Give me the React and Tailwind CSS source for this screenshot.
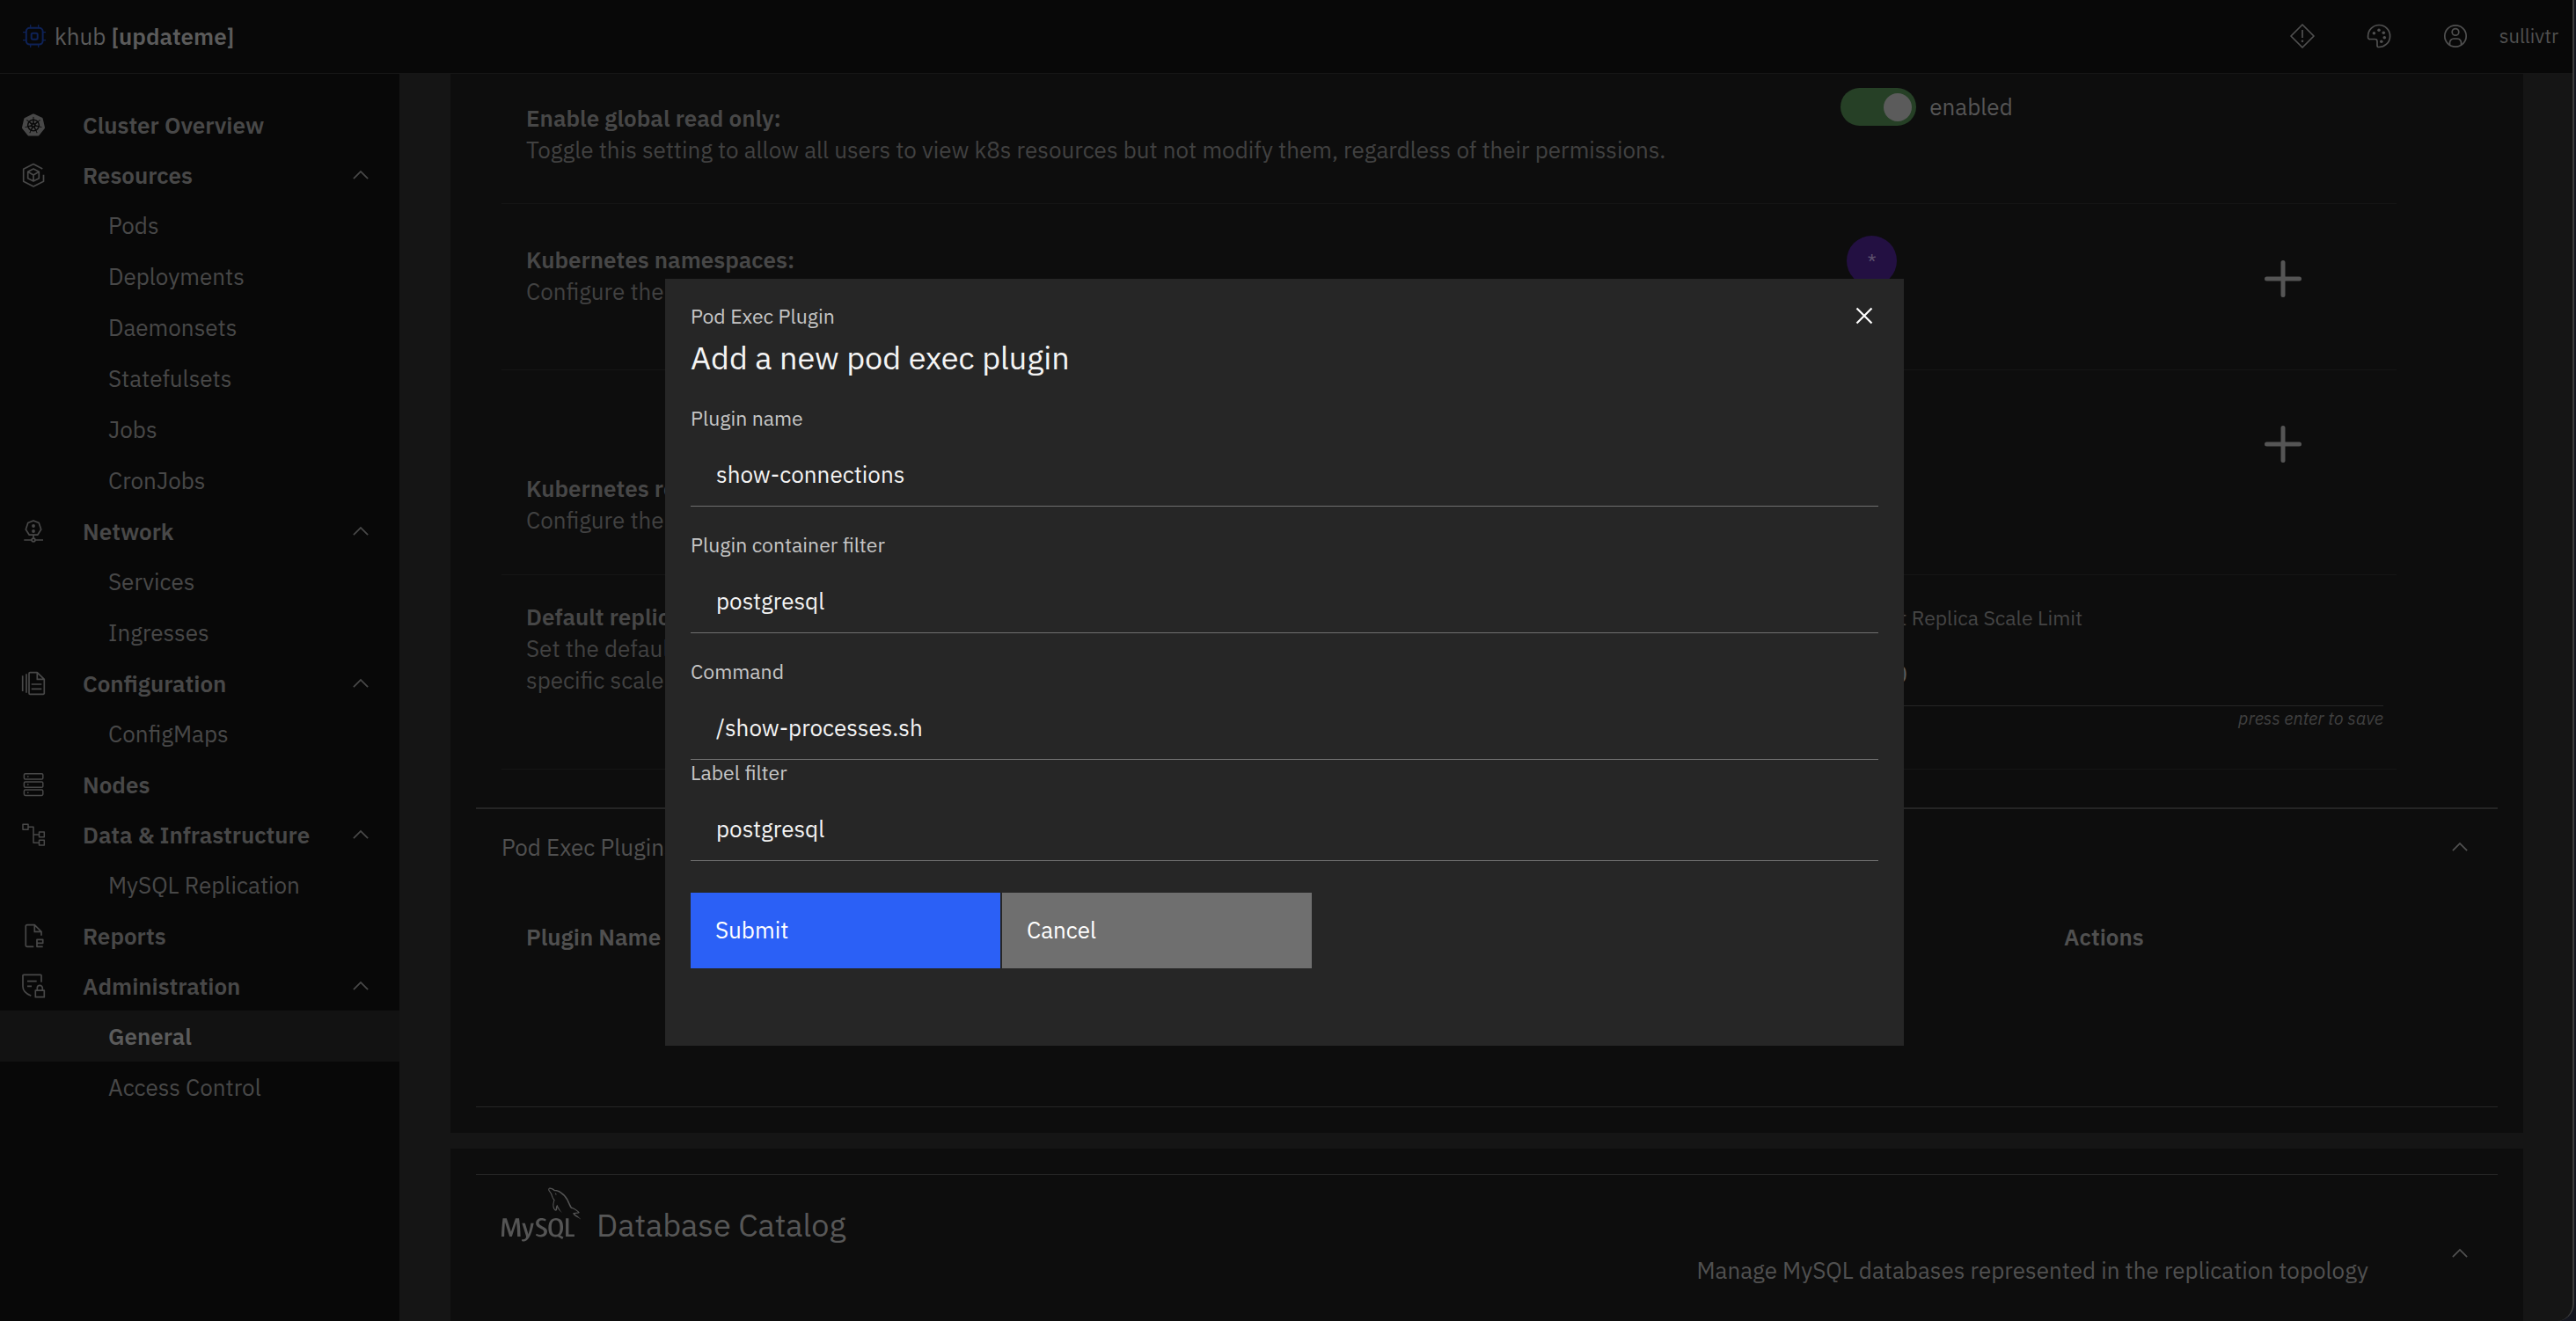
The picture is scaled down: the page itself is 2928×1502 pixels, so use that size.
import React from "react";
import { SiKubernetes, SiMysql } from "react-icons/si";

const Svg = ({ children, size = "size-7", vb = "0 0 28 28", sw = "1.7", className = "" }) => (
  <svg
    viewBox={vb}
    className={`${size} shrink-0 ${className}`}
    fill="none"
    stroke="currentColor"
    strokeWidth={sw}
    strokeLinejoin="round"
    aria-hidden="true"
  >
    {children}
  </svg>
);

const Chevron = () => (
  <svg viewBox="0 0 32 32" className="size-7 shrink-0" fill="currentColor" aria-hidden="true">
    <path d="M16 10 26 20l-1.4 1.4L16 12.8l-8.6 8.6L6 20z" />
  </svg>
);

const Chip = () => (
  <Svg size="size-[26px]" vb="0 0 26 26" sw="1.7" className="text-[#0e2257]">
    <rect x="3.8" y="3.8" width="18.8" height="18.8" rx="4" strokeWidth="2" />
    <rect x="9.7" y="9.7" width="7" height="7" rx="1.6" strokeWidth="2" />
    <path strokeWidth="1.2" d="M8.7 0v3.5M17.7 0v3.5M8.7 22.8V26M17.7 22.8V26M0 8.7h3.5M0 17.7h3.5M22.8 8.7H26M22.8 17.7H26" />
  </Svg>
);

const ResourcesIcon = () => (
  <Svg>
    <path d="M24.3 7 14 1.5 2.7 7.2v14L14 27l11.5-5.8v-7.5" />
    <path d="m14 7 6.3 3.3v7.4L14 21l-6.3-3.3v-7.4zM7.7 10.3 14 14l6.3-3.7M14 14v7" />
  </Svg>
);

const NetworkIcon = () => (
  <Svg>
    <path d="m14 2 6.2 2.5 2.5 7.5-4 6.2H9.3L5.3 12l2.5-7.5zM14 18.2V22M3.3 24H12M16 24h9" />
    <circle cx="14" cy="24" r="1.9" />
    <circle cx="14" cy="8" r="1.9" fill="currentColor" stroke="none" />
    <circle cx="14" cy="14" r="1.9" fill="currentColor" stroke="none" />
  </Svg>
);

const ConfigIcon = () => (
  <Svg>
    <path d="M1.7 5.3V23M6 3.3v21.4M18.3 1.7H10A1.2 1.2 0 0 0 9 3v22a1.2 1.2 0 0 0 1 1.3h15a1.2 1.2 0 0 0 1.3-1.3V9.4zv7.7h8M11.7 15h11.6M11.7 20.3h11.6" />
  </Svg>
);

const NodesIcon = () => (
  <Svg sw="1.5">
    <rect x="3.4" y="1.7" width="21.4" height="6.4" rx="1.4" />
    <rect x="3.4" y="10.9" width="21.4" height="6.4" rx="1.4" />
    <rect x="3.4" y="20" width="21.4" height="6.4" rx="1.4" />
    <path d="M7 4.9h1.5M7 14.1h1.5M7 23.2h1.5" />
  </Svg>
);

const DataIcon = () => (
  <Svg sw="1.5">
    <path d="M2 2.2h6v6H2zM20.5 11h5.8v5.8h-5.8zM20.5 20.2h5.8V26h-5.8zM8 5.2h6v18h6.5M14 14h6.5" />
  </Svg>
);

const ReportsIcon = () => (
  <Svg>
    <path d="M14.3 26.3H6.6A1.3 1.3 0 0 1 5.3 25V3a1.3 1.3 0 0 1 1.3-1.3h8.7L23 9.4v4.3M15.3 1.7v7.7H23M24.7 26.3H18v-8h6.7v4H18" />
  </Svg>
);

const AdminIcon = () => (
  <Svg>
    <path d="M23 9.7V2.3a1 1 0 0 0-1-1H3a1 1 0 0 0-1 1v12.4C2 20 6 23 11.3 25.2M7 8.7h10.7M7 14.3h5" />
    <path d="M16.3 19.2h10v7.5h-10zM18.3 19v-2.6a3 3 0 0 1 6 0V19" />
  </Svg>
);

const AlertIcon = () => (
  <Svg>
    <path d="M14 1 27 14 14 27 1 14zM14 7v9" />
    <circle cx="14" cy="19.7" r="1.3" fill="currentColor" stroke="none" />
  </Svg>
);

const PaletteIcon = () => (
  <Svg>
    <path d="M4 17.5h5.5A2.5 2.5 0 0 1 12 20v5a1.5 1.5 0 0 0 1.5 1.5A12.5 12.5 0 1 0 1.6 14v1.5a2 2 0 0 0 2.4 2z" />
    <g fill="currentColor" stroke="none">
      <circle cx="8.4" cy="10.7" r="1.8" />
      <circle cx="14" cy="7.3" r="1.8" />
      <circle cx="19.3" cy="10.3" r="1.8" />
      <circle cx="20.3" cy="15.7" r="1.8" />
      <circle cx="16.8" cy="20.3" r="1.8" />
    </g>
  </Svg>
);

const UserIcon = () => (
  <Svg>
    <circle cx="14" cy="14" r="12.2" />
    <circle cx="14" cy="9.4" r="3.8" />
    <path d="M7.5 24v-2.6a4.4 4.4 0 0 1 4.4-4.4h4.2a4.4 4.4 0 0 1 4.4 4.4V24" />
  </Svg>
);

const Plus = () => (
  <svg viewBox="0 0 42 42" className="size-[42px]" stroke="currentColor" strokeWidth="5" strokeLinecap="round" aria-hidden="true">
    <path d="M21 2.5v37M2.5 21h37" />
  </svg>
);

const NAV = [
  { label: "Cluster Overview", icon: <SiKubernetes className="size-[26px]" /> },
  { label: "Resources", icon: <ResourcesIcon />, items: ["Pods", "Deployments", "Daemonsets", "Statefulsets", "Jobs", "CronJobs"] },
  { label: "Network", icon: <NetworkIcon />, items: ["Services", "Ingresses"] },
  { label: "Configuration", icon: <ConfigIcon />, items: ["ConfigMaps"] },
  { label: "Nodes", icon: <NodesIcon /> },
  { label: "Data & Infrastructure", icon: <DataIcon />, items: ["MySQL Replication"] },
  { label: "Reports", icon: <ReportsIcon /> },
  { label: "Administration", icon: <AdminIcon />, items: ["General", "Access Control"] },
];

function NavHead({ group }) {
  const body = (
    <>
      <span className="flex w-7 justify-center">{group.icon}</span>
      <span className="ml-[42px] flex-1 text-left">{group.label}</span>
      {group.items && <Chevron />}
    </>
  );
  const cls = "flex h-[57px] w-full items-center pr-[30px] pl-6 font-semibold";
  return group.items ? (
    <button type="button" aria-expanded="true" className={cls}>{body}</button>
  ) : (
    <a href="#" className={cls}>{body}</a>
  );
}

function Sidebar() {
  return (
    <nav className="w-[454px] shrink-0 bg-[#080808] pt-[29px] text-[#484848]">
      <ul>
        {NAV.map((g) => (
          <li key={g.label}>
            <NavHead group={g} />
            {g.items && (
              <ul>
                {g.items.map((i) => (
                  <li key={i}>
                    <a
                      href="#"
                      className={
                        i === "General"
                          ? "flex h-[58px] items-center bg-[#121212] pl-[123px] font-semibold text-[#5b5b5b]"
                          : "flex h-[58px] items-center pl-[123px]"
                      }
                    >
                      {i}
                    </a>
                  </li>
                ))}
              </ul>
            )}
          </li>
        ))}
      </ul>
    </nav>
  );
}

function Header() {
  return (
    <header className="flex h-[84px] shrink-0 items-center border-b border-[#161616] bg-[#080808] pr-4 pb-0.5 pl-[26px]">
      <Chip />
      <a href="#" className="ml-[10px] text-[#5b5b5b]">
        khub <span className="font-semibold">[updateme]</span>
      </a>
      <div className="ml-auto flex items-center text-[#505050]">
        <button type="button" aria-label="Alerts" className="flex w-[87px] justify-center"><AlertIcon /></button>
        <button type="button" aria-label="Theme" className="flex w-[87px] justify-center"><PaletteIcon /></button>
        <button type="button" aria-label="Account" className="flex w-[87px] justify-center"><UserIcon /></button>
        <span className="ml-1.5 text-[22px]">sullivtr</span>
      </div>
    </header>
  );
}

function Setting({ title, desc, className, children }) {
  return (
    <div className="grid grid-cols-[1523fr_632fr] border-b border-[#151515]">
      <div className={`pl-7 text-[#414141] ${className}`}>
        <h3 className="font-semibold text-[#474747]">{title}</h3>
        <p>{desc}</p>
      </div>
      {children}
    </div>
  );
}

function ClusterSettings() {
  return (
    <section className="bg-[#0d0d0d] px-[29px] pb-[29px]">
      <div className="mr-[115px] ml-[29px]">
        <Setting
          title="Enable global read only:"
          desc="Toggle this setting to allow all users to view k8s resources but not modify them, regardless of their permissions."
          className="pt-8 pb-[43px]"
        >
          <label className="flex items-start pt-4 text-[#555555]">
            <input type="checkbox" role="switch" defaultChecked className="peer sr-only" />
            <span className="flex h-[43px] w-[86px] items-center justify-end rounded-full bg-[#264026] pr-[5px]">
              <span className="size-8 rounded-full bg-[#5b5b5b]" />
            </span>
            <span className="pt-[3px] pl-[15px]">enabled</span>
          </label>
        </Setting>
        <Setting title="Kubernetes namespaces:" desc="Configure the" className="pt-[45px] pb-[71px]">
          <div className="flex items-start justify-between pr-[108px] pl-[7px]">
            <span className="mt-9 flex size-[57px] items-center justify-center rounded-full bg-[#231042] text-[23px] text-[#5b4f6c]">*</span>
            <button type="button" aria-label="Add namespace" className="mt-16 text-[#555555]"><Plus /></button>
          </div>
        </Setting>
        <Setting title="Kubernetes resources:" desc="Configure the" className="pt-[116px] pb-11">
          <div className="flex justify-end pr-[108px]">
            <button type="button" aria-label="Add resource" className="mt-[63px] mb-auto text-[#555555]"><Plus /></button>
          </div>
        </Setting>
        <Setting
          title="Default replica:"
          desc={<>Set the default<br />specific scale</>}
          className="pt-[29px] pb-[83px]"
        >
          <div className="flex flex-col pt-[34px] pr-[15px]">
            <label htmlFor="limit" className="text-[23px] leading-7 text-[#454545]">Default Replica Scale Limit</label>
            <input id="limit" defaultValue="100" className="mt-[14px] h-[73px] w-full border-b border-[#252525] bg-transparent px-[29px] text-[#5b5b5b]" />
            <p className="text-right text-[20px] leading-7 text-[#404040] italic">press enter to save</p>
          </div>
        </Setting>
      </div>
      <div className="mt-[43px] border-t-2 border-b border-t-[#252525] border-b-[#262626] pb-[175px]">
        <button type="button" aria-expanded="true" className="flex w-full items-center justify-between pt-[25px] pr-[29px] pl-[29px] text-[#505050]">
          <span>Pod Exec Plugins</span>
          <Chevron />
        </button>
        <table className="mt-[66px] ml-[26px] w-[98%] table-fixed text-left text-[#505050]">
          <thead>
            <tr>
              <th scope="col" className="w-[79%] p-0 pl-[31px] font-semibold">Plugin Name</th>
              <th scope="col" className="p-0 font-semibold">Actions</th>
            </tr>
          </thead>
        </table>
      </div>
    </section>
  );
}

function DatabaseCatalog() {
  return (
    <section className="flex-1 bg-[#0d0d0d] px-[29px] pt-[29px]">
      <div className="flex border-t border-[#262626] pr-[29px] pl-[29px] text-[#505050]">
        <div className="flex-1">
          <div className="flex items-start gap-[18px]">
            <SiMysql className="size-[90px] text-[#555555]" aria-label="MySQL" />
            <h2 className="mt-[35px] text-[36px] leading-[44px] text-[#575757]">Database Catalog</h2>
          </div>
          <p className="pr-[90px] text-right">Manage MySQL databases represented in the replication topology</p>
        </div>
        <button type="button" aria-label="Collapse database catalog" aria-expanded="true" className="mt-[75px] self-start"><Chevron /></button>
      </div>
    </section>
  );
}

const FIELDS = [
  { id: "name", label: "Plugin name", value: "show-connections", gap: "mt-8" },
  { id: "container", label: "Plugin container filter", value: "postgresql", gap: "mt-[29px]" },
  { id: "command", label: "Command", value: "/show-processes.sh", gap: "mt-[29px]" },
  { id: "filter", label: "Label filter", value: "postgresql", gap: "mt-0" },
];

function PluginModal() {
  return (
    <div className="fixed inset-0 flex items-center justify-center pt-1 pr-2">
      <form role="dialog" aria-labelledby="modal-title" className="w-[1408px] max-w-full bg-[#262626] px-[29px] pt-7 pb-[88px] text-[#f4f4f4]">
        <div className="flex items-start justify-between">
          <div>
            <p className="text-[23px] leading-7 text-[#c6c6c6]">Pod Exec Plugin</p>
            <h2 id="modal-title" className="mt-3 text-[36px] leading-[44px]">Add a new pod exec plugin</h2>
          </div>
          <button type="button" aria-label="Close" className="mr-0.5 text-white">
            <Svg sw="2.2"><path d="m5.5 5.5 17 17m0-17-17 17" /></Svg>
          </button>
        </div>
        {FIELDS.map((f) => (
          <div key={f.id} className={`flex flex-col ${f.gap}`}>
            <label htmlFor={f.id} className="text-[23px] leading-7 text-[#c6c6c6]">{f.label}</label>
            <input id={f.id} defaultValue={f.value} className="mt-[14px] h-[73px] w-full border-b border-[#6f6f6f] bg-transparent px-[29px]" />
          </div>
        ))}
        <div className="mt-9 flex gap-0.5 text-white">
          <button type="submit" className="h-[86px] w-[352px] bg-[#2b60f6] px-7 pb-0.5 text-left">Submit</button>
          <button type="button" className="h-[86px] w-[352px] bg-[#6f6f6f] px-7 pb-0.5 text-left">Cancel</button>
        </div>
      </form>
    </div>
  );
}

export default function App() {
  return (
    <div className="h-screen bg-[#14161f] pr-0.5 font-['IBM_Plex_Sans',Roboto,sans-serif] text-[26px] leading-9">
      <div className="flex h-full flex-col overflow-hidden rounded-br-[20px] border-r-2 border-[#3a3a3a] bg-[#151515]">
        <Header />
        <div className="flex min-h-0 flex-1">
          <Sidebar />
          <main className="flex min-w-0 flex-1 flex-col gap-[18px] pr-14 pl-[58px]">
            <ClusterSettings />
            <DatabaseCatalog />
          </main>
        </div>
      </div>
      <PluginModal />
    </div>
  );
}
